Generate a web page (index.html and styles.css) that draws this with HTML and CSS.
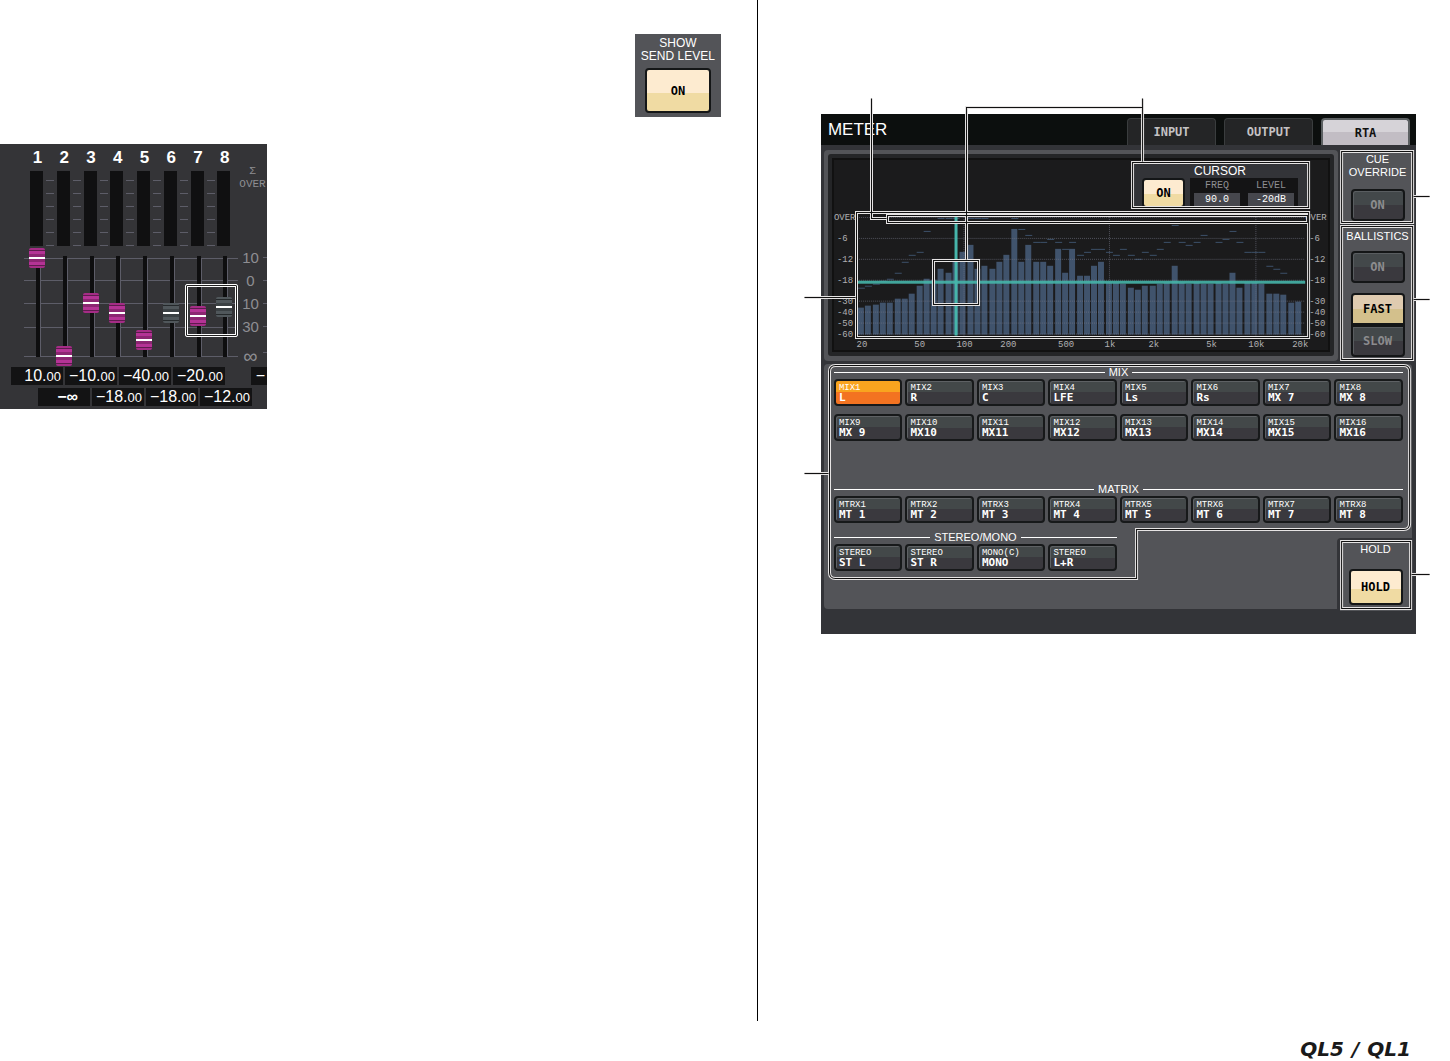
FILE: index.html
```html
<!DOCTYPE html>
<html lang="en">
<head>
  <meta charset="UTF-8" />
  <meta name="viewport" content="width=device-width, initial-scale=1" />
  <title>QL5/QL1 Meter</title>

  <link rel="stylesheet" href="styles.css">
</head>
<body>
  <main class="spread">
    <section class="page page-left">
      <div class="send-level">
        <span>SHOW</span>
        <span>SEND LEVEL</span>
        <button class="btn btn-lit" type="button">ON</button>
      </div>

      <!-- Fader bank -->
      <div class="fader-panel">
        <div class="bank">
          <div class="strips">
            <div class="strip"><label for="f1">1</label><div class="vu"></div><input id="f1" type="range" min="0" max="98" value="98"></div>
            <div class="strip"><label for="f2">2</label><div class="vu"></div><input id="f2" type="range" min="0" max="98" value="0"></div>
            <div class="strip"><label for="f3">3</label><div class="vu"></div><input id="f3" type="range" min="0" max="98" value="53"></div>
            <div class="strip"><label for="f4">4</label><div class="vu"></div><input id="f4" type="range" min="0" max="98" value="43"></div>
            <div class="strip"><label for="f5">5</label><div class="vu"></div><input id="f5" type="range" min="0" max="98" value="16"></div>
            <div class="strip off"><label for="f6">6</label><div class="vu"></div><input id="f6" type="range" min="0" max="98" value="43"></div>
            <div class="strip"><label for="f7">7</label><div class="vu"></div><input id="f7" type="range" min="0" max="98" value="40"></div>
            <div class="strip off"><label for="f8">8</label><div class="vu last"></div><input id="f8" type="range" min="0" max="98" value="49"></div>
            <div class="pair-frame"></div>
          </div>
          <div class="scale">
            <div class="over">&Sigma;<br>OVER</div>
            <span>10</span>
            <span>0</span>
            <span>10</span>
            <span>30</span>
            <span class="inf">&infin;</span>
          </div>
        </div>
        <div class="values">
          <output for="f1">10.<small>00</small></output>
          <output for="f3">&minus;10.<small>00</small></output>
          <output for="f5">&minus;40.<small>00</small></output>
          <output for="f7">&minus;20.<small>00</small></output>
          <output class="next">&minus;</output>
        </div>
        <div class="values values-even">
          <output for="f2" class="inf">&minus;&infin;</output>
          <output for="f4">&minus;18.<small>00</small></output>
          <output for="f6">&minus;18.<small>00</small></output>
          <output for="f8">&minus;12.<small>00</small></output>
        </div>
      </div>
    </section>

    <section class="page page-right">
      <div class="console">
        <header class="topbar">
          <h1>METER</h1>
          <nav class="tabs">
            <button class="tab" type="button">INPUT</button>
            <button class="tab" type="button">OUTPUT</button>
            <button class="tab active" type="button">RTA</button>
          </nav>
        </header>

        <div class="upper">
          <div class="rta">
            <div class="rta-screen">
              <div class="cursor-box">
                <h2>CURSOR</h2>
                <div class="cursor-row">
                  <button class="btn btn-lit" type="button">ON</button>
                  <div class="readouts">
                    <div class="readout"><span>FREQ</span><output>90.0</output></div>
                    <div class="readout"><span>LEVEL</span><output>-20dB</output></div>
                  </div>
                </div>
              </div>
              <svg class="plot" viewBox="0 0 500 143" role="img" aria-label="Real time analyzer">
                <g id="peaks" fill="#3c5069"></g>
                <g id="bars" fill="#40536c"></g>
                <g class="grid">
                  <path d="M25 7.5H475M25 28.5H475M25 49.5H475M25 70.5H475M25 91.5H475M25 102.5H475M25 113.5H475M25 124.5H475"/>
                  <path d="M132.5 7V126M278.5 7V126M425.5 7V126"/>
                </g>
                <g fill="#46b5aa">
                  <rect x="123" y="6" width="3" height="120"/>
                  <rect x="25" y="71" width="450" height="3" opacity=".9"/>
                </g>
                <g class="axis">
                  <text x="2" y="10">OVER</text>
                  <text x="5" y="31">-6</text>
                  <text x="5" y="52">-12</text>
                  <text x="5" y="73">-18</text>
                  <text x="5" y="94">-30</text>
                  <text x="5" y="105">-40</text>
                  <text x="5" y="116">-50</text>
                  <text x="5" y="127">-60</text>
                </g>
                <g class="axis">
                  <text x="475" y="10">OVER</text>
                  <text x="479" y="31">-6</text>
                  <text x="479" y="52">-12</text>
                  <text x="479" y="73">-18</text>
                  <text x="479" y="94">-30</text>
                  <text x="479" y="105">-40</text>
                  <text x="479" y="116">-50</text>
                  <text x="479" y="127">-60</text>
                </g>
                <g class="axis bottom">
                  <text x="30" y="138">20</text>
                  <text x="88" y="138">50</text>
                  <text x="133" y="138">100</text>
                  <text x="177" y="138">200</text>
                  <text x="235" y="138">500</text>
                  <text x="279" y="138">1k</text>
                  <text x="323" y="138">2k</text>
                  <text x="381" y="138">5k</text>
                  <text x="426" y="138">10k</text>
                  <text x="470" y="138">20k</text>
                </g>
              </svg>
            </div>
          </div>

          <aside class="side">
            <div class="side-box cue">
              <h2>CUE<br>OVERRIDE</h2>
              <button class="btn" type="button">ON</button>
            </div>
            <div class="side-box ballistics">
              <h2>BALLISTICS</h2>
              <button class="btn" type="button">ON</button>
              <div class="speed">
                <button class="btn btn-lit fast" type="button">FAST</button>
                <button class="btn" type="button">SLOW</button>
              </div>
            </div>
          </aside>
        </div>

        <div class="lower">
          <div class="channels">
            <div class="group mix">
              <h3>MIX</h3>
              <button class="ch selected" type="button"><span>MIX1</span>L</button>
              <button class="ch" type="button"><span>MIX2</span>R</button>
              <button class="ch" type="button"><span>MIX3</span>C</button>
              <button class="ch" type="button"><span>MIX4</span>LFE</button>
              <button class="ch" type="button"><span>MIX5</span>Ls</button>
              <button class="ch" type="button"><span>MIX6</span>Rs</button>
              <button class="ch" type="button"><span>MIX7</span>MX 7</button>
              <button class="ch" type="button"><span>MIX8</span>MX 8</button>
              <button class="ch" type="button"><span>MIX9</span>MX 9</button>
              <button class="ch" type="button"><span>MIX10</span>MX10</button>
              <button class="ch" type="button"><span>MIX11</span>MX11</button>
              <button class="ch" type="button"><span>MIX12</span>MX12</button>
              <button class="ch" type="button"><span>MIX13</span>MX13</button>
              <button class="ch" type="button"><span>MIX14</span>MX14</button>
              <button class="ch" type="button"><span>MIX15</span>MX15</button>
              <button class="ch" type="button"><span>MIX16</span>MX16</button>
            </div>
            <div class="group matrix">
              <h3>MATRIX</h3>
              <button class="ch" type="button"><span>MTRX1</span>MT 1</button>
              <button class="ch" type="button"><span>MTRX2</span>MT 2</button>
              <button class="ch" type="button"><span>MTRX3</span>MT 3</button>
              <button class="ch" type="button"><span>MTRX4</span>MT 4</button>
              <button class="ch" type="button"><span>MTRX5</span>MT 5</button>
              <button class="ch" type="button"><span>MTRX6</span>MT 6</button>
              <button class="ch" type="button"><span>MTRX7</span>MT 7</button>
              <button class="ch" type="button"><span>MTRX8</span>MT 8</button>
            </div>
            <div class="group stereo">
              <h3>STEREO/MONO</h3>
              <button class="ch" type="button"><span>STEREO</span>ST L</button>
              <button class="ch" type="button"><span>STEREO</span>ST R</button>
              <button class="ch" type="button"><span>MONO(C)</span>MONO</button>
              <button class="ch" type="button"><span>STEREO</span>L+R</button>
            </div>
          </div>
          <div class="hold">
            <div class="side-box">
              <h2>HOLD</h2>
              <button class="btn btn-lit" type="button">HOLD</button>
            </div>
          </div>
        </div>

        <!-- Callout frames and leader lines -->
        <svg class="callouts" viewBox="0 0 595 520" preserveAspectRatio="none" aria-hidden="true">
          <defs>
            <g id="lines">
              <rect x="36" y="99" width="452" height="125"/>
              <rect x="67" y="102" width="420" height="7"/>
              <rect x="312" y="49" width="176" height="45"/>
              <rect x="113" y="147" width="45" height="44"/>
              <rect x="521" y="38" width="71" height="71"/>
              <rect x="521" y="113" width="71" height="133"/>
              <rect x="521" y="428" width="69" height="67"/>
              <path d="M15 252H583Q589 252 589 258V410Q589 416 583 416H316V465H15Q9 465 9 459V258Q9 252 15 252Z"/>
              <path d="M51 -15V105H66"/>
              <path d="M322 -15V48M322 -6H146V146"/>
              <path d="M-16 184H35M-16 360H8"/>
              <path d="M593 83H609M593 186H609M591 461H609"/>
            </g>
          </defs>
          <use href="#lines" class="halo"/>
          <use href="#lines" class="core"/>
        </svg>
      </div>
    </section>
  </main>

  <footer>
    <div class="brand"><span>QL5</span><span>/</span><span>QL1</span></div>
  </footer>

  <script src="script.js"></script>
</body>
</html>
```
FILE: styles.css
```css
*, *::before, *::after {
  box-sizing: border-box;
}

body {
  margin: 0;
  min-height: 100vh;
  display: flex;
  flex-direction: column;
  background: #fff;
  color: #fff;
  font-family: "Liberation Sans", Arial, sans-serif;
}

h1, h2, h3 {
  margin: 0;
  font-weight: normal;
}

button {
  margin: 0;
  padding: 0;
  cursor: pointer;
}

.spread {
  flex: 1;
  display: flex;
}

.page-left {
  width: 52.2%;
  display: flex;
  flex-direction: column;
  align-items: flex-start;
}

.page-right {
  flex: 1;
  border-left: 1px solid #000;
  padding: 114px 34px 0 63px;
}

/* Shared buttons */
.btn {
  display: block;
  font: bold 12px "DejaVu Sans Mono", monospace;
  color: #8c8c8e;
  background: linear-gradient(#43484a 50%, #3a393e 50%);
  border: 2px solid #141617;
  border-radius: 4px;
  box-shadow: inset 1px 1px 0 #595d60;
}

.btn-lit {
  color: #000;
  background: linear-gradient(#fdebd0 55%, #f0dba3 55%);
  box-shadow: none;
}

/* Show send level */
.send-level {
  align-self: flex-end;
  width: 86px;
  height: 83px;
  margin: 34px 36px 27px 0;
  padding-top: 3px;
  background: #535458;
  text-align: center;
  font-size: 12px;
  line-height: 13px;
}

.send-level span {
  display: block;
  white-space: nowrap;
}

.send-level .btn {
  width: 66px;
  height: 45px;
  margin: 5px auto 0;
}

/* Fader bank */
.fader-panel {
  width: 267px;
  height: 265px;
  overflow: hidden;
  background: #343437;
}

.bank {
  display: flex;
  padding-left: 24px;
}

.strips {
  position: relative;
  display: flex;
  width: 214px;
  background:
    linear-gradient(#5d5d68, #5d5d68) 0 114px / 100% 1px no-repeat,
    linear-gradient(#5d5d68, #5d5d68) 0 136px / 100% 1px no-repeat,
    linear-gradient(#5d5d68, #5d5d68) 0 159px / 100% 1px no-repeat,
    linear-gradient(#5d5d68, #5d5d68) 0 183px / 100% 1px no-repeat,
    linear-gradient(#5d5d68, #5d5d68) 0 212px / 100% 1px no-repeat;
}

.strip {
  flex: 1;
  display: flex;
  flex-direction: column;
}

.strip label {
  height: 27px;
  padding-top: 4px;
  text-align: center;
  font-size: 17px;
  line-height: 20px;
  font-weight: bold;
}

.vu {
  height: 75px;
  margin: 0 -4px 2px 0;
  background:
    linear-gradient(#101011, #101011) 6px 0 / 13px 100% no-repeat,
    repeating-linear-gradient(transparent 0 9px, #5d5d68 9px 10px, transparent 10px 13px) 22px 0 / 8px 100% no-repeat;
}

.vu.last {
  margin-right: 0;
  background: linear-gradient(#101011, #101011) 6px 0 / 13px 100% no-repeat;
}

.strip input {
  writing-mode: vertical-lr;
  direction: rtl;
  -webkit-appearance: none;
  appearance: none;
  width: 26px;
  height: 118px;
  margin: 0;
  background:
    linear-gradient(#0e0e0f, #0e0e0f) 12px 8px / 4px 101px no-repeat,
    linear-gradient(#5d5d68, #5d5d68) 16px 11px / 1px 98px no-repeat;
}

.strip input::-webkit-slider-thumb {
  -webkit-appearance: none;
  width: 16px;
  height: 20px;
  border-radius: 2px;
  background: linear-gradient(#a52c86 0 2px, #5d1c4d 2px 3px, #b43395 3px 6px, #8c2672 6px 9px, #fff 9px 11px, #8c2672 11px 14px, #b43395 14px 17px, #5d1c4d 17px 18px, #a52c86 18px);
}

.strip.off input::-webkit-slider-thumb {
  background: linear-gradient(#50575b 0 2px, #25292b 2px 3px, #50575b 3px 6px, #3b4144 6px 9px, #fff 9px 11px, #3b4144 11px 14px, #50575b 14px 17px, #25292b 17px 18px, #50575b 18px);
}

.pair-frame {
  position: absolute;
  left: 161px;
  top: 140px;
  width: 53px;
  height: 53px;
  border: 1px solid #fff;
  border-radius: 2px;
  box-shadow: inset 0 0 0 1px #222, inset 0 0 0 2px #fff;
  pointer-events: none;
}

.scale {
  flex: 1;
  text-align: center;
  color: #8e8e92;
  font-size: 15px;
}

.over {
  height: 102px;
  padding-top: 21px;
  font: 11px/13px "Liberation Mono", monospace;
}

.scale span {
  display: block;
  height: 23px;
  padding-right: 4px;
  line-height: 23px;
  background: linear-gradient(#5d5d68, #5d5d68) right / 4px 1px no-repeat;
}

.scale .inf {
  height: 28px;
  line-height: 36px;
  font-size: 20px;
}

.values {
  display: flex;
  gap: 2px;
  padding: 1px 0 0 11px;
}

.values-even {
  padding: 3px 0 0 38px;
}

.values output {
  flex: 0 0 52px;
  height: 18px;
  padding-right: 2px;
  background: #131314;
  text-align: right;
  white-space: nowrap;
  font-size: 16px;
  line-height: 18px;
}

.values small {
  font-size: 13px;
}

.values .next {
  flex: 0 0 16px;
  margin-left: 24px;
}

.values .inf {
  padding-right: 12px;
  font-weight: bold;
}

/* Console screen */
.console {
  position: relative;
  padding-bottom: 23px;
  background: #333438;
}

.topbar {
  display: flex;
  justify-content: space-between;
  align-items: flex-end;
  height: 31px;
  padding: 0 6px 0 7px;
  background: #0c0f0e;
}

.topbar h1 {
  font-size: 17px;
  line-height: 31px;
}

.tabs {
  display: flex;
  gap: 8px;
}

.tab {
  width: 89px;
  height: 27px;
  border: 1px solid #3a3d3e;
  border-bottom: 0;
  border-radius: 4px 4px 0 0;
  background: #242526;
  color: #c4c2c4;
  font: bold 12px "DejaVu Sans Mono", monospace;
}

.tab.active {
  border: 2px solid #5c6062;
  border-bottom: 0;
  background: linear-gradient(#d6d3d8 50%, #c2bdc4 50%);
  color: #111;
}

.upper {
  display: flex;
  gap: 3px;
  padding: 5px 3px 3px;
}

.rta {
  flex: 1;
  padding: 4px 4px 3px;
  border-radius: 4px;
  background: #535458;
}

.rta-screen {
  display: flex;
  flex-direction: column;
  border: 4px solid #242527;
  border-radius: 3px;
  background: #1b1b1c;
  box-shadow: inset 0 0 0 2px #111;
}

.cursor-box {
  align-self: flex-end;
  width: 176px;
  height: 44px;
  margin: 6px 22px 2px 0;
  padding-left: 10px;
  background: #333438;
}

.cursor-box h2 {
  text-align: center;
  font-size: 12px;
  line-height: 14px;
  padding-right: 10px;
}

.cursor-row {
  display: flex;
  gap: 5px;
}

.cursor-row .btn {
  width: 43px;
  height: 30px;
}

.readouts {
  display: flex;
  background: #141415;
}

.readout {
  width: 54px;
  padding: 0 4px;
  text-align: center;
  color: #8e8e92;
  font: 10px/15px "Liberation Mono", monospace;
}

.readout span,
.readout output {
  display: block;
}

.readout output {
  height: 14px;
  line-height: 14px;
  background: #46474d;
  color: #fff;
}

.plot {
  display: block;
  width: 100%;
}

.grid {
  fill: none;
  stroke: #77798a;
  stroke-opacity: 0.6;
  stroke-dasharray: 1 1;
}

.axis {
  fill: #b0b0b2;
  font: 9px "Liberation Mono", monospace;
}

.axis.bottom {
  text-anchor: middle;
}

/* Right side boxes */
.side {
  width: 73px;
  margin-right: -1px;
}

.side-box {
  display: flex;
  flex-direction: column;
  align-items: center;
  background: #535458;
}

.side-box h2 {
  text-align: center;
  font-size: 11px;
  line-height: 13px;
}

.side-box .btn {
  width: 54px;
  height: 32px;
}

.cue {
  height: 73px;
  padding-top: 3px;
  margin-bottom: 2px;
}

.cue .btn {
  margin-top: 10px;
}

.ballistics {
  height: 136px;
  padding-top: 5px;
}

.ballistics > .btn {
  margin: 8px 0 10px;
}

.speed .fast {
  background: linear-gradient(#dfcbb0 50%, #d3c08c 50%);
  border-radius: 4px 4px 0 0;
}

.speed .btn + .btn {
  border-radius: 0 0 4px 4px;
}

/* Channel select */
.lower {
  display: grid;
  grid-template-columns: 1fr 79px;
}

.channels {
  grid-area: 1 / 1 / 2 / 3;
  margin: 0 4px 2px 3px;
  padding: 2px 9px 38px 10px;
  border-radius: 4px;
  background: #535458;
}

.group {
  display: grid;
  grid-template-columns: repeat(8, 1fr);
  column-gap: 3px;
}

.group h3 {
  grid-column: 1 / -1;
  display: flex;
  align-items: center;
  gap: 4px;
  height: 12px;
  margin-bottom: 1px;
  font-size: 11px;
  line-height: 12px;
}

.group h3::before,
.group h3::after {
  content: '';
  flex: 1;
  height: 1px;
  background: #fff;
}

.mix {
  row-gap: 8px;
  margin-bottom: 42px;
}

.mix h3 {
  margin-bottom: -7px;
}

.matrix {
  margin-bottom: 8px;
}

.stereo h3 {
  grid-column: span 4;
}

.stereo h3 + .ch {
  grid-column: 1;
}

.ch {
  height: 27px;
  padding: 1px 0 0 3px;
  border: 2px solid #17191a;
  border-radius: 4px;
  background: linear-gradient(#434849 50%, #3a393e 50%);
  box-shadow: inset 1px 1px 0 #5e6164;
  color: #fff;
  text-align: left;
  font: bold 11px/10px "DejaVu Sans Mono", monospace;
}

.ch span {
  display: block;
  font: 9px/10px "Liberation Mono", monospace;
}

.ch.selected {
  background: linear-gradient(#f9a41f 50%, #f37321 50%);
  box-shadow: none;
}

.hold {
  grid-area: 1 / 2 / 2 / 3;
  align-self: end;
  z-index: 1;
  padding: 2px 5px 0 3px;
  border-radius: 4px 0 0 0;
  background: #333438;
}

.hold .side-box {
  height: 71px;
  padding-top: 3px;
}

.hold .btn {
  height: 36px;
  margin-top: 13px;
}

/* Callouts */
.callouts {
  position: absolute;
  inset: 0;
  z-index: 2;
  width: 100%;
  height: 100%;
  overflow: visible;
  pointer-events: none;
}

.callouts use {
  transform: translate(-0.5px, -0.5px);
}

.halo {
  fill: none;
  stroke: #e6e4e4;
  stroke-width: 3px;
}

.core {
  fill: none;
  stroke: #111;
  stroke-width: 1px;
}

footer {
  display: flex;
  justify-content: flex-end;
  align-items: flex-end;
  height: 40px;
  padding-right: 39px;
}

.brand {
  display: flex;
  gap: 8px;
  color: #1a1a1a;
  font: italic bold 20px/24px "DejaVu Sans", sans-serif;
}
```
FILE: script.js
```js
// bar and peak-hold heights in plot units, one entry per band
const bars = [
  27, 29, 30, 32, 32, 36, 36, 41, 49, 56, 55, 66, 62, 73, 83, 90, 66, 69, 66, 73,
  80, 106, 73, 90, 73, 73, 69, 86, 62, 86, 59, 59, 69, 73, 52, 52, 51, 47, 45, 49,
  49, 51, 52, 69, 52, 51, 52, 51, 51, 52, 51, 62, 47, 52, 52, 51, 41, 41, 40, 32, 33
];
const peaks = [
  47, 49, 51, 54, 56, 62, 73, 80, 83, 104, 114, 117, 117, 117, 0, 117, 117, 117, 114, 114,
  114, 117, 106, 100, 93, 93, 96, 93, 86, 93, 80, 83, 86, 86, 83, 80, 86, 80, 76, 83,
  80, 86, 93, 110, 93, 90, 93, 100, 114, 93, 96, 104, 93, 83, 83, 83, 69, 66, 62, 0, 0
];

const base = 125;
const pitch = 439 / 60;

function addRect(group, x, y, w, h) {
  const rect = document.createElementNS('http://www.w3.org/2000/svg', 'rect');
  rect.setAttribute('x', x);
  rect.setAttribute('y', y);
  rect.setAttribute('width', w);
  rect.setAttribute('height', h);
  group.appendChild(rect);
}

const barGroup = document.getElementById('bars');
const peakGroup = document.getElementById('peaks');

bars.forEach((h, i) => addRect(barGroup, Math.round(26 + i * pitch), base - h, 6, h));
peaks.forEach((h, i) => {
  if (h) addRect(peakGroup, Math.round(26 + i * pitch), base - h, 7, 1);
});
```
